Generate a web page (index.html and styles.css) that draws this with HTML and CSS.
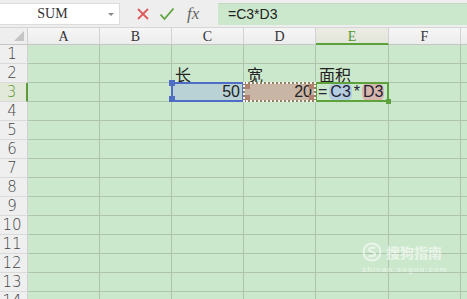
FILE: index.html
```html
<!DOCTYPE html>
<html>
<head>
<meta charset="utf-8">
<link rel="stylesheet" href="styles.css">
</head>
<body>
<div class="app">
  <div class="fbar">
    <div class="namebox"><span class="name">SUM</span><span class="caret"></span></div>
    <div class="tools">
      <svg class="ico" width="14" height="14" viewBox="0 0 14 14"><path d="M2 2 L12 12 M12 2 L2 12" stroke="#e0595a" stroke-width="1.8" fill="none"/></svg>
      <svg class="ico" width="16" height="14" viewBox="0 0 16 14"><path d="M1.5 7.5 L5.5 12 L14.5 1.5" stroke="#5aa23c" stroke-width="1.8" fill="none"/></svg>
      <span class="fx">fx</span>
    </div>
    <div class="finput">=C3*D3</div>
  </div>
  <div class="sheet">
    <div class="corner"><span class="tri"></span></div>
    <div class="ch">A</div><div class="ch">B</div><div class="ch">C</div><div class="ch">D</div><div class="ch active">E</div><div class="ch">F</div><div class="ch"></div>

    <div class="rh">1</div><div class="c"></div><div class="c"></div><div class="c"></div><div class="c"></div><div class="c"></div><div class="c"></div><div class="c"></div>
    <div class="rh">2</div><div class="c"></div><div class="c"></div><div class="c lbl">长</div><div class="c lbl">宽</div><div class="c lbl">面积</div><div class="c"></div><div class="c"></div>
    <div class="rh active">3</div><div class="c"></div><div class="c"></div><div class="c sel-c">50</div><div class="c sel-d">20</div><div class="c edit"><span>=</span><span class="ref-c">C3</span><span class="op">*</span><span class="ref-d">D3</span><span class="cursor"></span></div><div class="c"></div><div class="c"></div>
    <div class="rh">4</div><div class="c"></div><div class="c"></div><div class="c"></div><div class="c"></div><div class="c"></div><div class="c"></div><div class="c"></div>
    <div class="rh">5</div><div class="c"></div><div class="c"></div><div class="c"></div><div class="c"></div><div class="c"></div><div class="c"></div><div class="c"></div>
    <div class="rh">6</div><div class="c"></div><div class="c"></div><div class="c"></div><div class="c"></div><div class="c"></div><div class="c"></div><div class="c"></div>
    <div class="rh">7</div><div class="c"></div><div class="c"></div><div class="c"></div><div class="c"></div><div class="c"></div><div class="c"></div><div class="c"></div>
    <div class="rh">8</div><div class="c"></div><div class="c"></div><div class="c"></div><div class="c"></div><div class="c"></div><div class="c"></div><div class="c"></div>
    <div class="rh">9</div><div class="c"></div><div class="c"></div><div class="c"></div><div class="c"></div><div class="c"></div><div class="c"></div><div class="c"></div>
    <div class="rh">10</div><div class="c"></div><div class="c"></div><div class="c"></div><div class="c"></div><div class="c"></div><div class="c"></div><div class="c"></div>
    <div class="rh">11</div><div class="c"></div><div class="c"></div><div class="c"></div><div class="c"></div><div class="c"></div><div class="c"></div><div class="c"></div>
    <div class="rh">12</div><div class="c"></div><div class="c"></div><div class="c"></div><div class="c"></div><div class="c"></div><div class="c"></div><div class="c"></div>
    <div class="rh">13</div><div class="c"></div><div class="c"></div><div class="c"></div><div class="c"></div><div class="c"></div><div class="c"></div><div class="c"></div>
    <div class="rh">14</div><div class="c"></div><div class="c"></div><div class="c"></div><div class="c"></div><div class="c"></div><div class="c"></div><div class="c"></div>
  </div>
  <div class="watermark">
    <div class="wm-top">
      <svg width="20" height="20" viewBox="0 0 20 20"><circle cx="10" cy="10" r="8.5" fill="none" stroke="#fff" stroke-width="2"/><path d="M13 6.5 C11 5 6.5 5.5 7 8 C7.5 10 13 9.5 13 12 C13 14.5 8.5 15 6.5 13.5" fill="none" stroke="#fff" stroke-width="2.2"/></svg>
      <span class="wm-name">搜狗指南</span>
    </div>
    <div class="wm-url">shinan.sogou.com</div>
  </div>
</div>
</body>
</html>
```
FILE: styles.css
```css
* { box-sizing: border-box; }
html, body { margin: 0; padding: 0; }
body {
  width: 467px;
  height: 299px;
  overflow: hidden;
  background: #cce8cc;
  font-family: "Liberation Sans", "Noto Sans CJK SC", sans-serif;
}
.app { position: relative; width: 467px; height: 299px; overflow: hidden; }

.fbar {
  display: flex;
  align-items: center;
  height: 28px;
  padding: 3px 0 3px 0;
  background: #eeeeee;
  border-bottom: 1px solid #d6d6d6;
}
.namebox {
  position: relative;
  width: 120px;
  height: 22px;
  background: #ffffff;
  border: 1px solid #dcdcdc;
  border-left: none;
  display: flex;
  align-items: center;
  justify-content: center;
}
.name {
  font-family: "Liberation Serif", serif;
  font-size: 14px;
  color: #333;
  margin-left: -14px;
}
.caret {
  position: absolute;
  right: 5px;
  top: 9px;
  width: 0; height: 0;
  border-left: 3px solid transparent;
  border-right: 3px solid transparent;
  border-top: 3px solid #888;
}
.tools {
  width: 98px;
  display: flex;
  align-items: center;
  padding-left: 16px;
}
.tools .ico { margin-right: 9px; }
.tools .ico + .ico { margin-right: 12px; }
.fx {
  font-family: "Liberation Serif", serif;
  font-style: italic;
  font-size: 17px;
  color: #666;
  line-height: 1;
}
.finput {
  flex: 1;
  height: 22px;
  background: #cce8cc;
  border-top: 1px solid #c4d8c4;
  padding-left: 10px;
  font-size: 14px;
  line-height: 21px;
  color: #222;
}

.sheet {
  display: grid;
  grid-template-columns: 28px 72px 72px 72px 72px 73px 72px 20px;
  grid-template-rows: 17px repeat(14, 19px);
}
.corner {
  position: relative;
  background: #eeeeee;
  border-right: 1px solid #cfcfcf;
  border-bottom: 1px solid #c6c6c6;
}
.tri {
  position: absolute;
  right: 3px;
  bottom: 3px;
  width: 0; height: 0;
  border-left: 10px solid transparent;
  border-bottom: 10px solid #c4c4c4;
}
.ch {
  background: linear-gradient(#f6f6f6, #ececec);
  border-right: 1px solid #d2d2d2;
  border-bottom: 1px solid #c6c6c6;
  text-align: center;
  font-family: "Liberation Serif", serif;
  font-size: 14px;
  line-height: 17px;
  color: #333;
}
.ch.active {
  background: linear-gradient(#ececE4, #e2e6da);
  color: #4e9a2e;
  border-bottom: 2px solid #5ca03c;
}
.rh {
  background: #efefef;
  border-right: 1px solid #cfcfcf;
  border-bottom: 1px solid #dadada;
  text-align: center;
  font-size: 15px;
  line-height: 19px;
  color: #444;
  font-family: "DejaVu Sans", sans-serif;
  font-weight: 200;
  padding-right: 3px;
  overflow: hidden;
}
.rh.active {
  background: #e2e9d8;
  color: #5c9a3a;
  border-right: 2px solid #5c9a3a;
}
.c {
  position: relative;
  background: #cce8cc;
  border-right: 1px solid #afc3af;
  border-bottom: 1px solid #afc3af;
  font-size: 16px;
  line-height: 18px;
  color: #222;
  white-space: nowrap;
}
.lbl {
  padding-left: 3px;
  font-family: "Noto Sans CJK SC", sans-serif;
  font-size: 16px;
  line-height: 17px;
  padding-top: 2px;
}
.sel-c {
  background: #b9d2d6;
  text-align: right;
  padding-right: 3px;
}
.sel-c::after {
  content: "";
  position: absolute;
  inset: -1px -1px -1px -1px;
  border: 2px solid #4d6ec4;
}
.sel-c::before {
  content: "";
  position: absolute;
  left: -3px;
  top: -3px;
  width: 6px;
  height: 22px;
  background:
    linear-gradient(#4d6ec4, #4d6ec4) top / 6px 6px no-repeat,
    linear-gradient(#4d6ec4, #4d6ec4) bottom / 6px 6px no-repeat;
  z-index: 3;
}
.sel-d {
  background: #c9b5a5;
  text-align: right;
  padding-right: 3px;
  z-index: 2;
}
.sel-d::after {
  content: "";
  position: absolute;
  inset: -1px -1px -1px -1px;
  border: 2px solid #8f8460;
  background:
    linear-gradient(#b08070, #b08070) left top / 5px 5px no-repeat,
    linear-gradient(#b08070, #b08070) left bottom / 5px 5px no-repeat,
    linear-gradient(#b08070, #b08070) right top / 5px 5px no-repeat,
    linear-gradient(#b08070, #b08070) right bottom / 5px 5px no-repeat;
}
.sel-d::before {
  content: "";
  position: absolute;
  inset: -1px -1px -1px -1px;
  border: 2px dotted rgba(255, 255, 255, 0.9);
  z-index: 1;
}
.edit {
  display: flex;
  align-items: center;
  gap: 2px;
  padding-left: 2px;
  font-size: 16px;
  color: #223;
  z-index: 1;
}
.edit::after {
  content: "";
  position: absolute;
  inset: -1px -1px -1px -1px;
  border: 2px solid #5ea23e;
}
.edit::before {
  content: "";
  position: absolute;
  right: -3px;
  bottom: -3px;
  width: 5px;
  height: 5px;
  background: #5ea23e;
  z-index: 2;
}
.ref-c {
  background: #b4cde0;
  border-radius: 6px;
  padding: 0 1px;
}
.ref-d {
  background: #d7b7ad;
  border-radius: 6px;
  padding: 0 1px;
}
.cursor {
  display: inline-block;
  width: 1px;
  height: 15px;
  background: #222;
  margin-left: 4px;
}

.watermark {
  position: absolute;
  left: 362px;
  top: 242px;
  opacity: 0.6;
  color: #fff;
}
.wm-top {
  display: flex;
  align-items: center;
  gap: 4px;
}
.wm-name {
  font-family: "Noto Sans CJK SC", sans-serif;
  font-size: 14px;
  font-weight: 700;
  line-height: 20px;
}
.wm-url {
  font-size: 8px;
  letter-spacing: 1.3px;
  margin-top: 3px;
}
```
